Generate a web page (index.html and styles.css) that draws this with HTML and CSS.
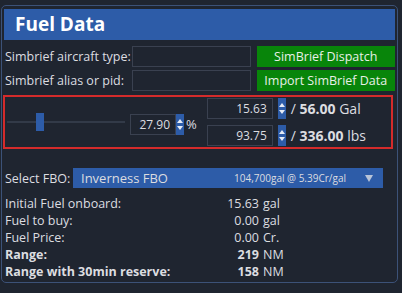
FILE: index.html
```html
<!DOCTYPE html>
<html lang="en">
<head>
    <meta charset="UTF-8">
    <title>Fuel Data</title>
    <link rel="stylesheet" href="styles.css">
</head>
<body>
    <div class="panel">
        <div class="panel-head">Fuel Data</div>

        <!-- SimBrief -->
        <div class="sb-row first">
            <label class="sb-label">Simbrief aircraft type:</label>
            <input class="sb-input" type="text">
            <button class="green-btn">SimBrief Dispatch</button>
        </div>
        <div class="sb-row">
            <label class="sb-label">Simbrief alias or pid:</label>
            <input class="sb-input" type="text">
            <button class="green-btn">Import SimBrief Data</button>
        </div>

        <!-- Cantidad de combustible -->
        <div class="fuel-box">
            <div class="slider">
                <div class="slider-track"></div>
                <div class="slider-thumb"></div>
            </div>
            <div class="pct">
                <div class="num-field pct-field">27.90</div>
                <div class="spin"><span class="up"></span><span class="down"></span></div>
                <span class="unit">%</span>
            </div>
            <div class="amounts">
                <div class="amount-row">
                    <div class="num-field amt-field">15.63</div>
                    <div class="spin"><span class="up"></span><span class="down"></span></div>
                    <span class="total">/ <b>56.00</b> Gal</span>
                </div>
                <div class="amount-row">
                    <div class="num-field amt-field">93.75</div>
                    <div class="spin"><span class="up"></span><span class="down"></span></div>
                    <span class="total">/ <b>336.00</b> lbs</span>
                </div>
            </div>
        </div>

        <!-- FBO -->
        <div class="fbo-row">
            <span class="fbo-label">Select FBO:</span>
            <div class="fbo-select">
                <span class="fbo-name">Inverness FBO</span>
                <span class="fbo-info">104,700gal @ 5.39Cr/gal</span>
                <span class="fbo-arrow"></span>
            </div>
        </div>

        <div class="info">
            <span>Initial Fuel onboard:</span><span class="n">15.63</span><span>gal</span>
            <span>Fuel to buy:</span><span class="n">0.00</span><span>gal</span>
            <span>Fuel Price:</span><span class="n">0.00</span><span>Cr.</span>
            <b>Range:</b><b class="n">219</b><span>NM</span>
            <b>Range with 30min reserve:</b><b class="n">158</b><span>NM</span>
        </div>
    </div>
</body>
</html>
```
FILE: styles.css
```css
body {
    margin: 0;
    padding: 5px 4px 0 1px;
    background: #1f2530;
    color: #dcdde0;
    font-family: "Open Sans", "Noto Sans", sans-serif;
    font-size: 12.5px;
}

.panel {
    border: 1px solid #3c5278;
    border-radius: 5px;
    padding: 3px 2px 8px 2px;
    height: 278px;
    box-sizing: border-box;
}

.panel-head {
    background: #2d5ca8;
    color: #fff;
    font-weight: bold;
    font-size: 19px;
    height: 31px;
    line-height: 31px;
    padding-left: 11px;
}

/* Filas de SimBrief */
.sb-row {
    display: flex;
    align-items: center;
    height: 21px;
    margin-top: 3px;
}

.sb-row.first {
    margin-top: 6px;
}

.sb-label {
    width: 127px;
    padding-left: 1px;
    white-space: nowrap;
}

.sb-input {
    width: 119px;
    height: 21px;
    box-sizing: border-box;
    background: #1f2530;
    border: 1px solid #3a4150;
    margin: 0;
}

.green-btn {
    margin-left: 6px;
    width: 139px;
    height: 21px;
    background: #08850a;
    border: none;
    color: #e8f0e8;
    font-family: inherit;
    font-size: 12.5px;
    padding: 0;
}

/* Caja roja */
.fuel-box {
    margin: 4px 2px 0 -1px;
    border: 2px solid #d42b2b;
    height: 54px;
    box-sizing: border-box;
    display: flex;
    align-items: center;
}

.slider {
    position: relative;
    width: 118px;
    height: 18px;
    margin-left: 2px;
}

.slider-track {
    position: absolute;
    left: 0;
    right: 0;
    top: 8px;
    height: 2px;
    background: #323a48;
}

.slider-thumb {
    position: absolute;
    left: 29px;
    top: 0;
    width: 8px;
    height: 18px;
    background: #2d5ca8;
}

.pct {
    display: flex;
    align-items: center;
    margin-left: 5px;
    margin-top: 4px;
}

.num-field {
    height: 21px;
    box-sizing: border-box;
    border: 1px solid #3a4150;
    text-align: right;
    line-height: 19px;
    padding-right: 5px;
    font-size: 12px;
}

.pct-field {
    width: 46px;
}

.spin {
    width: 8px;
    height: 21px;
    background: #2d5ca8;
    display: flex;
    flex-direction: column;
    justify-content: center;
    align-items: center;
    gap: 3px;
}

.spin .up {
    border-left: 3px solid transparent;
    border-right: 3px solid transparent;
    border-bottom: 4px solid #e6ecf6;
}

.spin .down {
    border-left: 3px solid transparent;
    border-right: 3px solid transparent;
    border-top: 4px solid #e6ecf6;
}

.unit {
    margin-left: 2px;
    font-size: 13px;
}

.amounts {
    margin-left: 10px;
    display: flex;
    flex-direction: column;
    gap: 6px;
}

.amount-row {
    display: flex;
    align-items: center;
}

.amt-field {
    width: 66px;
}

.amount-row .spin {
    margin-left: 5px;
}

.total {
    margin-left: 5px;
    font-size: 14px;
}

/* FBO */
.fbo-row {
    display: flex;
    align-items: center;
    margin-top: 19px;
}

.fbo-label {
    width: 68px;
    padding-left: 1px;
}

.fbo-select {
    width: 310px;
    height: 20px;
    background: #2d5ca8;
    display: flex;
    align-items: center;
    padding-left: 8px;
    box-sizing: border-box;
}

.fbo-name {
    font-size: 13px;
    flex: 1;
}

.fbo-info {
    font-size: 10px;
}

.fbo-arrow {
    margin-left: 19px;
    margin-right: 10px;
    border-left: 4px solid transparent;
    border-right: 4px solid transparent;
    border-top: 7px solid #b8c4d8;
}

.info {
    display: grid;
    grid-template-columns: 190px 60px auto;
    column-gap: 4px;
    line-height: 17px;
    margin-top: 7px;
    padding-left: 1px;
}

.info .n {
    text-align: right;
}
```
